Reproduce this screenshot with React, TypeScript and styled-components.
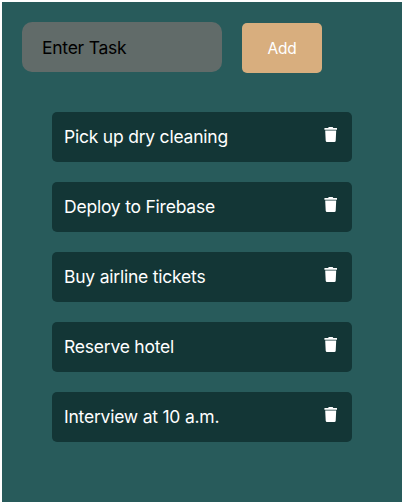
import React, { useState } from "react";
import styled, { createGlobalStyle } from "styled-components";

const GlobalStyle = createGlobalStyle`
  * { box-sizing: border-box; }
  body {
    margin: 0;
    background: #fff;
    font-family: Inter, "Liberation Sans", sans-serif;
    font-size: 17.5px;
    letter-spacing: -0.25px;
  }
`;

const Board = styled.main`
  width: 400px;
  height: 500px;
  margin: 2px;
  padding: 20px;
  background: #285b5b;
`;

const TaskForm = styled.form`
  display: flex;
  align-items: flex-start;
  gap: 20px;
`;

const TaskInput = styled.input`
  width: 200px;
  height: 50px;
  padding: 0 20px;
  border: 0;
  border-radius: 10px;
  outline: 0;
  background: #616b69;
  color: #000;
  font: inherit;
  letter-spacing: inherit;
  &::placeholder { color: #000; opacity: 1; }
`;

const AddButton = styled.button`
  width: 80px;
  height: 50px;
  margin-top: 1px;
  padding: 0;
  border: 0;
  border-radius: 5px;
  background: #d8ae7e;
  color: #fff;
  font: inherit;
  font-size: 15.5px;
  letter-spacing: -0.2px;
`;

const TaskList = styled.ul`
  display: flex;
  flex-direction: column;
  gap: 20px;
  margin: 39px 30px 0;
  padding: 0;
  list-style: none;
`;

const TaskRow = styled.li`
  display: flex;
  align-items: center;
  justify-content: space-between;
  height: 50px;
  padding: 0 14px 0 12px;
  border-radius: 5px;
  background: #133636;
  color: #fff;
`;

const TaskName = styled.span`
  padding-bottom: 2px;
  letter-spacing: -0.22px;
`;

const DeleteButton = styled.button`
  display: flex;
  margin-bottom: 4px;
  padding: 0;
  border: 0;
  background: none;
  color: #fff;
`;

const TrashIcon = () => (
  <svg width="14" height="16" viewBox="0 0 14 16" fill="currentColor" aria-hidden="true">
    <path d="M.7 1h3.4L4.8.1h3.8l.7.9h3.4q.3 0 .3.3v1.4H.4V1.3Q.4 1 .7 1z" />
    <path d="M1.2 3.4h11l-.5 10.4a1.3 1.3 0 0 1-1.3 1.2H3a1.3 1.3 0 0 1-1.3-1.2z" />
  </svg>
);

const initialTasks = [
  "Pick up dry cleaning",
  "Deploy to Firebase",
  "Buy airline tickets",
  "Reserve hotel",
  "Interview at 10 a.m.",
];

export default function App() {
  const [tasks, setTasks] = useState(initialTasks);
  const [draft, setDraft] = useState("");

  const addTask = (event: React.FormEvent) => {
    event.preventDefault();
    if (!draft.trim()) return;
    setTasks([...tasks, draft.trim()]);
    setDraft("");
  };

  return (
    <>
      <GlobalStyle />
      <Board>
        <TaskForm onSubmit={addTask}>
          <TaskInput
            placeholder="Enter Task"
            value={draft}
            onChange={(event) => setDraft(event.target.value)}
          />
          <AddButton type="submit">Add</AddButton>
        </TaskForm>
        <TaskList>
          {tasks.map((task, index) => (
            <TaskRow key={index}>
              <TaskName>{task}</TaskName>
              <DeleteButton
                type="button"
                aria-label={`Delete ${task}`}
                onClick={() => setTasks(tasks.filter((_, i) => i !== index))}
              >
                <TrashIcon />
              </DeleteButton>
            </TaskRow>
          ))}
        </TaskList>
      </Board>
    </>
  );
}
